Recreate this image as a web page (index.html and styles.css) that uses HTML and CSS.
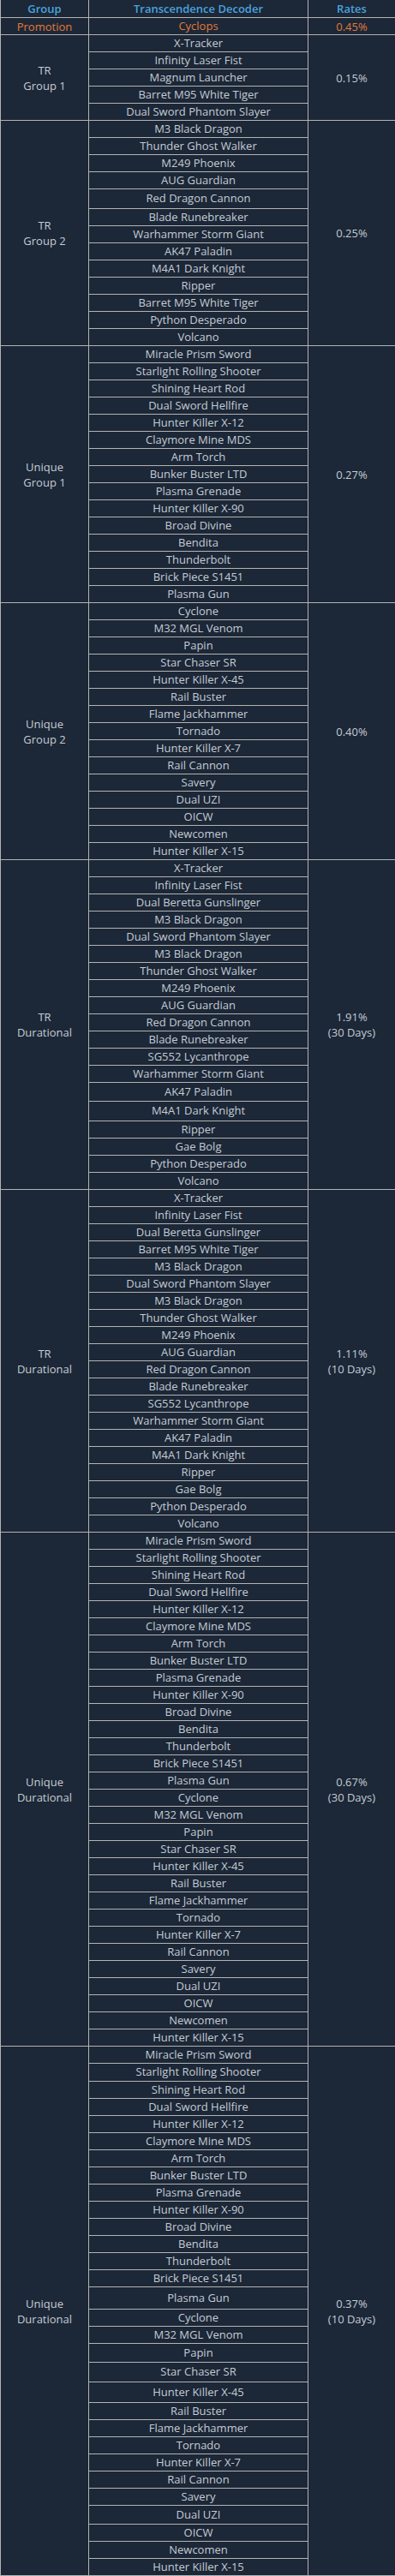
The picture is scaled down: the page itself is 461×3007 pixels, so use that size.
FILE: index.html
```html
<!DOCTYPE html>
<html lang="en">
<head>
<meta charset="utf-8">
<title>Transcendence Decoder Rates</title>
<link rel="stylesheet" href="styles.css">
</head>
<body>
<table class="rates">
  <colgroup>
    <col class="c-group">
    <col class="c-item">
    <col class="c-rate">
  </colgroup>
  <thead>
    <tr><th>Group</th><th>Transcendence Decoder</th><th>Rates</th></tr>
  </thead>
  <tbody>
    <tr class="promo"><td>Promotion</td><td class="item">Cyclops</td><td>0.45%</td></tr>

    <tr><td class="group" rowspan="5">TR<br>Group 1</td><td class="item">X-Tracker</td><td class="rate" rowspan="5">0.15%</td></tr>
    <tr><td class="item">Infinity Laser Fist</td></tr>
    <tr><td class="item">Magnum Launcher</td></tr>
    <tr><td class="item">Barret M95 White Tiger</td></tr>
    <tr><td class="item">Dual Sword Phantom Slayer</td></tr>

    <tr><td class="group" rowspan="13">TR<br>Group 2</td><td class="item">M3 Black Dragon</td><td class="rate" rowspan="13">0.25%</td></tr>
    <tr><td class="item">Thunder Ghost Walker</td></tr>
    <tr><td class="item">M249 Phoenix</td></tr>
    <tr><td class="item">AUG Guardian</td></tr>
    <tr><td class="item p23">Red Dragon Cannon</td></tr>
    <tr><td class="item">Blade Runebreaker</td></tr>
    <tr><td class="item">Warhammer Storm Giant</td></tr>
    <tr><td class="item">AK47 Paladin</td></tr>
    <tr><td class="item">M4A1 Dark Knight</td></tr>
    <tr><td class="item">Ripper</td></tr>
    <tr><td class="item">Barret M95 White Tiger</td></tr>
    <tr><td class="item">Python Desperado</td></tr>
    <tr><td class="item">Volcano</td></tr>

    <tr><td class="group" rowspan="15">Unique<br>Group 1</td><td class="item">Miracle Prism Sword</td><td class="rate" rowspan="15">0.27%</td></tr>
    <tr><td class="item">Starlight Rolling Shooter</td></tr>
    <tr><td class="item">Shining Heart Rod</td></tr>
    <tr><td class="item">Dual Sword Hellfire</td></tr>
    <tr><td class="item">Hunter Killer X-12</td></tr>
    <tr><td class="item">Claymore Mine MDS</td></tr>
    <tr><td class="item">Arm Torch</td></tr>
    <tr><td class="item">Bunker Buster LTD</td></tr>
    <tr><td class="item">Plasma Grenade</td></tr>
    <tr><td class="item">Hunter Killer X-90</td></tr>
    <tr><td class="item">Broad Divine</td></tr>
    <tr><td class="item">Bendita</td></tr>
    <tr><td class="item">Thunderbolt</td></tr>
    <tr><td class="item">Brick Piece S1451</td></tr>
    <tr><td class="item">Plasma Gun</td></tr>

    <tr><td class="group" rowspan="15">Unique<br>Group 2</td><td class="item">Cyclone</td><td class="rate" rowspan="15">0.40%</td></tr>
    <tr><td class="item">M32 MGL Venom</td></tr>
    <tr><td class="item">Papin</td></tr>
    <tr><td class="item">Star Chaser SR</td></tr>
    <tr><td class="item">Hunter Killer X-45</td></tr>
    <tr><td class="item">Rail Buster</td></tr>
    <tr><td class="item">Flame Jackhammer</td></tr>
    <tr><td class="item">Tornado</td></tr>
    <tr><td class="item">Hunter Killer X-7</td></tr>
    <tr><td class="item">Rail Cannon</td></tr>
    <tr><td class="item">Savery</td></tr>
    <tr><td class="item">Dual UZI</td></tr>
    <tr><td class="item">OICW</td></tr>
    <tr><td class="item">Newcomen</td></tr>
    <tr><td class="item">Hunter Killer X-15</td></tr>

    <tr><td class="group" rowspan="19">TR<br>Durational</td><td class="item">X-Tracker</td><td class="rate" rowspan="19">1.91%<br>(30 Days)</td></tr>
    <tr><td class="item">Infinity Laser Fist</td></tr>
    <tr><td class="item">Dual Beretta Gunslinger</td></tr>
    <tr><td class="item">M3 Black Dragon</td></tr>
    <tr><td class="item">Dual Sword Phantom Slayer</td></tr>
    <tr><td class="item">M3 Black Dragon</td></tr>
    <tr><td class="item">Thunder Ghost Walker</td></tr>
    <tr><td class="item">M249 Phoenix</td></tr>
    <tr><td class="item">AUG Guardian</td></tr>
    <tr><td class="item">Red Dragon Cannon</td></tr>
    <tr><td class="item">Blade Runebreaker</td></tr>
    <tr><td class="item">SG552 Lycanthrope</td></tr>
    <tr><td class="item">Warhammer Storm Giant</td></tr>
    <tr><td class="item p22">AK47 Paladin</td></tr>
    <tr><td class="item p23">M4A1 Dark Knight</td></tr>
    <tr><td class="item">Ripper</td></tr>
    <tr><td class="item">Gae Bolg</td></tr>
    <tr><td class="item">Python Desperado</td></tr>
    <tr><td class="item">Volcano</td></tr>

    <tr><td class="group" rowspan="20">TR<br>Durational</td><td class="item">X-Tracker</td><td class="rate" rowspan="20">1.11%<br>(10 Days)</td></tr>
    <tr><td class="item">Infinity Laser Fist</td></tr>
    <tr><td class="item">Dual Beretta Gunslinger</td></tr>
    <tr><td class="item">Barret M95 White Tiger</td></tr>
    <tr><td class="item">M3 Black Dragon</td></tr>
    <tr><td class="item">Dual Sword Phantom Slayer</td></tr>
    <tr><td class="item">M3 Black Dragon</td></tr>
    <tr><td class="item">Thunder Ghost Walker</td></tr>
    <tr><td class="item">M249 Phoenix</td></tr>
    <tr><td class="item">AUG Guardian</td></tr>
    <tr><td class="item">Red Dragon Cannon</td></tr>
    <tr><td class="item">Blade Runebreaker</td></tr>
    <tr><td class="item">SG552 Lycanthrope</td></tr>
    <tr><td class="item">Warhammer Storm Giant</td></tr>
    <tr><td class="item">AK47 Paladin</td></tr>
    <tr><td class="item">M4A1 Dark Knight</td></tr>
    <tr><td class="item">Ripper</td></tr>
    <tr><td class="item">Gae Bolg</td></tr>
    <tr><td class="item">Python Desperado</td></tr>
    <tr><td class="item">Volcano</td></tr>

    <tr><td class="group" rowspan="30">Unique<br>Durational</td><td class="item">Miracle Prism Sword</td><td class="rate" rowspan="30">0.67%<br>(30 Days)</td></tr>
    <tr><td class="item">Starlight Rolling Shooter</td></tr>
    <tr><td class="item">Shining Heart Rod</td></tr>
    <tr><td class="item">Dual Sword Hellfire</td></tr>
    <tr><td class="item">Hunter Killer X-12</td></tr>
    <tr><td class="item">Claymore Mine MDS</td></tr>
    <tr><td class="item">Arm Torch</td></tr>
    <tr><td class="item">Bunker Buster LTD</td></tr>
    <tr><td class="item">Plasma Grenade</td></tr>
    <tr><td class="item">Hunter Killer X-90</td></tr>
    <tr><td class="item">Broad Divine</td></tr>
    <tr><td class="item">Bendita</td></tr>
    <tr><td class="item">Thunderbolt</td></tr>
    <tr><td class="item">Brick Piece S1451</td></tr>
    <tr><td class="item">Plasma Gun</td></tr>
    <tr><td class="item">Cyclone</td></tr>
    <tr><td class="item">M32 MGL Venom</td></tr>
    <tr><td class="item">Papin</td></tr>
    <tr><td class="item">Star Chaser SR</td></tr>
    <tr><td class="item">Hunter Killer X-45</td></tr>
    <tr><td class="item">Rail Buster</td></tr>
    <tr><td class="item">Flame Jackhammer</td></tr>
    <tr><td class="item">Tornado</td></tr>
    <tr><td class="item">Hunter Killer X-7</td></tr>
    <tr><td class="item">Rail Cannon</td></tr>
    <tr><td class="item">Savery</td></tr>
    <tr><td class="item">Dual UZI</td></tr>
    <tr><td class="item">OICW</td></tr>
    <tr><td class="item">Newcomen</td></tr>
    <tr><td class="item">Hunter Killer X-15</td></tr>

    <tr><td class="group" rowspan="30">Unique<br>Durational</td><td class="item">Miracle Prism Sword</td><td class="rate" rowspan="30">0.37%<br>(10 Days)</td></tr>
    <tr><td class="item p21">Starlight Rolling Shooter</td></tr>
    <tr><td class="item">Shining Heart Rod</td></tr>
    <tr><td class="item">Dual Sword Hellfire</td></tr>
    <tr><td class="item">Hunter Killer X-12</td></tr>
    <tr><td class="item">Claymore Mine MDS</td></tr>
    <tr><td class="item">Arm Torch</td></tr>
    <tr><td class="item">Bunker Buster LTD</td></tr>
    <tr><td class="item">Plasma Grenade</td></tr>
    <tr><td class="item">Hunter Killer X-90</td></tr>
    <tr><td class="item">Broad Divine</td></tr>
    <tr><td class="item">Bendita</td></tr>
    <tr><td class="item">Thunderbolt</td></tr>
    <tr><td class="item">Brick Piece S1451</td></tr>
    <tr><td class="item p26">Plasma Gun</td></tr>
    <tr><td class="item">Cyclone</td></tr>
    <tr><td class="item">M32 MGL Venom</td></tr>
    <tr><td class="item p22">Papin</td></tr>
    <tr><td class="item p23">Star Chaser SR</td></tr>
    <tr><td class="item p24">Hunter Killer X-45</td></tr>
    <tr><td class="item">Rail Buster</td></tr>
    <tr><td class="item">Flame Jackhammer</td></tr>
    <tr><td class="item">Tornado</td></tr>
    <tr><td class="item">Hunter Killer X-7</td></tr>
    <tr><td class="item">Rail Cannon</td></tr>
    <tr><td class="item">Savery</td></tr>
    <tr><td class="item p22">Dual UZI</td></tr>
    <tr><td class="item">OICW</td></tr>
    <tr><td class="item">Newcomen</td></tr>
    <tr><td class="item">Hunter Killer X-15</td></tr>
  </tbody>
</table>
</body>
</html>
```

FILE: styles.css
```css
html,
body {
  margin: 0;
  padding: 0;
  background: #1c2737;
}

.rates {
  border-collapse: collapse;
  table-layout: fixed;
  width: 461px;
  font-family: "Open Sans", "Noto Sans", sans-serif;
  font-size: 13px;
  color: #c5ccd5;
  text-align: center;
}

.c-group { width: 103px; }
.c-item { width: 256px; }
.c-rate { width: 102px; }

.rates th,
.rates td {
  border: 1px solid #b3b3b3;
  padding: 0;
  vertical-align: middle;
  white-space: nowrap;
}

.rates thead th {
  border-top: 0;
  color: #4aa3df;
  font-weight: 600;
  line-height: 20px;
}

.rates td {
  line-height: 18px;
}

.rates td.item {
  line-height: 19px;
}

.promo td {
  color: #e27a3a;
}

.rates td.p21 { padding-bottom: 1px; }
.rates td.p22 { padding-top: 1px; padding-bottom: 1px; }
.rates td.p23 { padding-top: 1px; padding-bottom: 2px; }
.rates td.p24 { padding-top: 2px; padding-bottom: 2px; }
.rates td.p26 { padding-top: 3px; padding-bottom: 3px; }
```
